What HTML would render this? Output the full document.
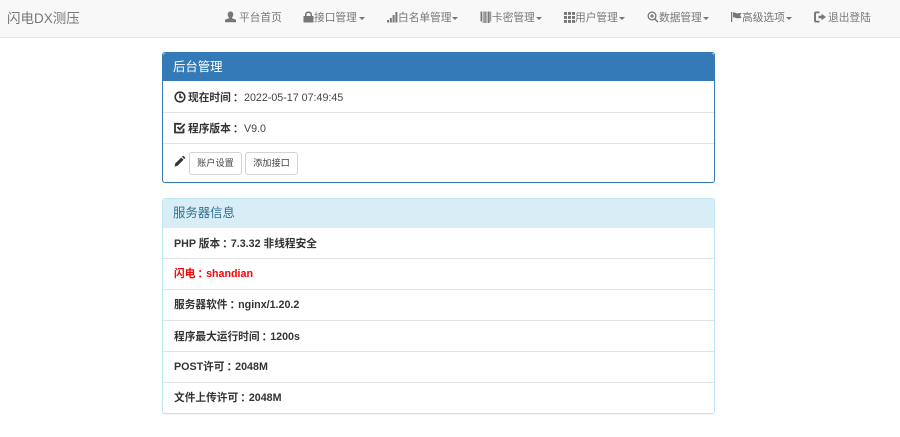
<!DOCTYPE html>
<html lang="zh"><head><meta charset="utf-8"><title>后台管理</title>
<style>
*{box-sizing:border-box}
html,body{margin:0;padding:0;width:900px;height:437px;overflow:hidden;background:#fff;font-family:"Liberation Sans","Noto Sans CJK SC",sans-serif;font-size:10.7px;color:#333}
#w{position:absolute;left:0;top:0;width:900px;height:437px;filter:blur(.3px)}
.a{position:absolute;white-space:nowrap;line-height:14px}
.nav{position:absolute;left:0;top:0;width:900px;height:38px;background:#f8f8f8;border-bottom:1px solid #e7e7e7}
.n{position:absolute;top:11px;line-height:14px;color:#777;white-space:nowrap;font-size:10.7px}
svg{position:absolute;fill:#777}
.c{position:absolute;top:17px;width:0;height:0;border-left:3px solid transparent;border-right:3px solid transparent;border-top:3px solid #777}
.panel{position:absolute;left:162px;width:553px;border-radius:3px;background:#fff;box-shadow:0 1px 1px rgba(0,0,0,.05)}
.h{position:absolute;left:0;top:0;width:100%;border-radius:3px 3px 0 0}
.t{position:absolute;left:11px;font-size:12.4px;line-height:16px;white-space:nowrap}
.r{position:absolute;left:0;width:100%;border-bottom:1px solid #e3e3e3}
.i{position:absolute;left:11px;font-weight:bold;line-height:14px;white-space:nowrap;color:#333}
.k{display:inline-block;width:1em;transform:translate(.2em,0)}
.btn{position:absolute;top:99px;height:23px;border:1px solid #d4d4d4;border-radius:3px;background:#fff;font-size:9.2px;line-height:21px;text-align:center;color:#444}
</style></head><body><div id="w">
<div class="nav">
<div class="a" style="left:7px;top:10px;font-size:13.5px;line-height:17px;color:#777">闪电DX测压</div>

<svg style="left:225px;top:11px" width="11" height="12" viewBox="0 0 11 11"><path d="M5.500 0C7.200 0 8.300 1.200 8.300 2.900 8.300 4.200 7.700 5.300 7.100 5.800V6.700L11 8.200V10.800H0V8.200L3.900 6.700V5.800C3.300 5.300 2.700 4.200 2.700 2.900 2.700 1.200 3.800 0 5.500 0Z"/></svg>
<span class="n" style="left:239px">平台首页</span>

<svg style="left:303px;top:11px" width="11" height="12" viewBox="0 0 11 12"><path fill-rule="evenodd" d="M.5 5H2V3.500C2 1.500 3.500.5 5.500.5S9 1.500 9 3.500V5H10.500V11.500H.5ZM3.500 5H7.500V3.500C7.500 2.500 6.700 2 5.500 2S3.500 2.500 3.500 3.500Z"/></svg>
<span class="n" style="left:314px">接口管理</span><i class="c" style="left:359px"></i>

<svg style="left:387px;top:11px" width="11" height="12" viewBox="0 0 11 12"><path d="M0 9h2v2.500H0zM2.800 7h2v4.500h-2zM5.600 4h2v7.500h-2zM8.400 1h2v10.500h-2z"/></svg>
<span class="n" style="left:398px">白名单管理</span><i class="c" style="left:452px"></i>

<svg style="left:480px;top:11px" width="12" height="13" viewBox="0 0 12 13"><path d="M.5 .5h1.500v10H.5zM2.700 .5h.9v11.500h-.9zM4.300 .5h1.500v11.500H4.300zM6.500 .5h.9v11.500h-.9zM8 .5h1.700v11.500H8zM10.300 .5h.9v10h-.9z"/></svg>
<span class="n" style="left:492px">卡密管理</span><i class="c" style="left:536px"></i>

<svg style="left:564px;top:12px" width="11" height="11" viewBox="0 0 11 11"><path d="M0 0h3v2.900H0zM4 0h3v2.900H4zM8 0h3v2.900H8zM0 4h3v2.900H0zM4 4h3v2.900H4zM8 4h3v2.900H8zM0 8h3v2.900H0zM4 8h3v2.900H4zM8 8h3v2.900H8z"/></svg>
<span class="n" style="left:575px">用户管理</span><i class="c" style="left:619px"></i>

<svg style="left:647px;top:11px" width="12" height="12" viewBox="0 0 12 12"><path fill-rule="evenodd" d="M5 .5a4.500 4.500 0 0 1 3.600 7.200l2.900 2.900-1 1-2.900-2.900A4.500 4.500 0 1 1 5 .5ZM5 1.800a3.200 3.200 0 1 0 0 6.400 3.200 3.200 0 0 0 0-6.400ZM4.400 3h1.200v1.400H7v1.200H5.600V7H4.400V5.600H3V4.400h1.400Z"/></svg>
<span class="n" style="left:659px">数据管理</span><i class="c" style="left:703px"></i>

<svg style="left:731px;top:11px" width="11" height="12" viewBox="0 0 11 12"><path d="M0 1h1.200v10H0zM2 1.500C4 .9 5 2.700 7 2.300L10.500 1.800 9.200 4.200 10.500 7 7 7.300C5 7.600 4 6 2 6.500Z"/></svg>
<span class="n" style="left:742px">高级选项</span><i class="c" style="left:786px"></i>

<svg style="left:814px;top:11px" width="12" height="12" viewBox="0 0 12 11"><path d="M2 0H5.500V1.700H2.800C2.300 1.700 2 2 2 2.500V8.500C2 9 2.300 9.300 2.800 9.300H5.500V11H2C.8 11 0 10.200 0 9V2C0 .8.800 0 2 0ZM7.500 2.200 12 5.500 7.500 8.800V6.800H4.500V4.200H7.500Z"/></svg>
<span class="n" style="left:828px">退出登陆</span>
</div>

<div class="panel" style="top:52px;height:131px;border:1px solid #337ab7">
<div class="h" style="height:28px;background:#337ab7"></div>
<div class="t" style="top:6px;left:10px;color:#fff">后台管理</div>
<div class="r" style="top:28px;height:32px"></div>
<div class="r" style="top:60px;height:31px"></div>

<svg style="left:11px;top:38px;fill:none;stroke:#333;stroke-width:1.600" width="12" height="12" viewBox="0 0 12 12"><circle cx="6" cy="6" r="4.800"/><path d="M6 2.800V6.400H8.600"/></svg>
<div class="i" style="left:25px;top:38px">现在时间<span class="k">：</span></div>
<div class="a" style="left:81px;top:38px;color:#444">2022-05-17 07:49:45</div>

<svg style="left:11px;top:69px;fill:none;stroke:#333;stroke-width:1.800" width="12" height="12" viewBox="0 0 12 12"><path d="M9.500 6.500V10.500H1V1.800H7.500"/><path d="M3.500 5 5.700 7.300 10.800 2"/></svg>
<div class="i" style="left:25px;top:69px">程序版本<span class="k">：</span></div>
<div class="a" style="left:81px;top:69px;color:#444">V9.0</div>

<svg style="left:11px;top:102px;fill:#333" width="12" height="12" viewBox="0 0 12 12"><path d="M9.200.6 11.400 2.800 10.200 4 8 1.800ZM7.300 2.500 9.500 4.700 3.500 10.700.5 11.500 1.300 8.500Z"/></svg>
<div class="btn" style="left:26px;width:53px">账户设置</div>
<div class="btn" style="left:82px;width:53px">添加接口</div>
</div>

<div class="panel" style="top:198px;height:216px;border:1px solid #bce8f1">
<div class="h" style="height:29px;background:#d9edf7"></div>
<div class="t" style="top:6px;left:10px;color:#31708f">服务器信息</div>
<div class="r" style="top:29px;height:31px"></div>
<div class="r" style="top:60px;height:31px"></div>
<div class="r" style="top:91px;height:31px"></div>
<div class="r" style="top:122px;height:31px"></div>
<div class="r" style="top:153px;height:31px"></div>
<div class="i" style="top:38px">PHP 版本<span class="k">：</span>7.3.32 非线程安全</div>
<div class="i" style="top:68px;color:#f00">闪电<span class="k">：</span>shandian</div>
<div class="i" style="top:99px">服务器软件<span class="k">：</span>nginx/1.20.2</div>
<div class="i" style="top:131px">程序最大运行时间<span class="k">：</span>1200s</div>
<div class="i" style="top:161px">POST许可<span class="k">：</span>2048M</div>
<div class="i" style="top:192px">文件上传许可<span class="k">：</span>2048M</div>
</div>
</div></body></html>
